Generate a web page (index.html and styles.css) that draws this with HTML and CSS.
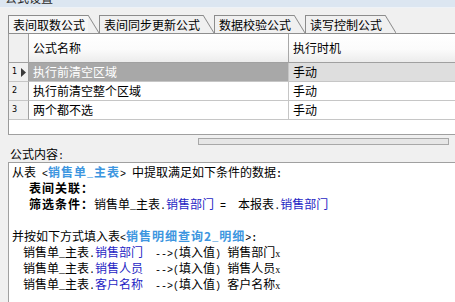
FILE: index.html
```html
<!DOCTYPE html>
<html lang="zh-CN">
<head>
<meta charset="utf-8">
<title>公式设置</title>
<link rel="stylesheet" href="styles.css">
</head>
<body>
<div class="titlebar"><span>公式设置</span></div>
<div class="main">
  <div class="tabs">
    <div class="tab active"><span class="lbl">表间取数公式</span><span class="slant"></span></div>
    <div class="tab"><span class="lbl">表间同步更新公式</span><span class="slant"></span></div>
    <div class="tab"><span class="lbl">数据校验公式</span><span class="slant"></span></div>
    <div class="tab"><span class="lbl">读写控制公式</span><span class="slant"></span></div>
  </div>
  <div class="grid">
    <div class="row head">
      <div class="rh"></div>
      <div class="c1">公式名称</div>
      <div class="c2">执行时机</div>
    </div>
    <div class="row sel">
      <div class="rh"><span class="num">1</span><svg class="arrow" width="5" height="9" viewBox="0 0 5 9"><polygon points="0,0 5,4.5 0,9" fill="#3a3a3a"/></svg></div>
      <div class="c1">执行前清空区域</div>
      <div class="c2">手动</div>
    </div>
    <div class="row">
      <div class="rh"><span class="num">2</span></div>
      <div class="c1">执行前清空整个区域</div>
      <div class="c2">手动</div>
    </div>
    <div class="row">
      <div class="rh"><span class="num">3</span></div>
      <div class="c1">两个都不选</div>
      <div class="c2">手动</div>
    </div>
    <div class="empty"></div>
  </div>
  <div class="hscroll"></div>
  <div class="label">公式内容<span class="h">:</span></div>
  <div class="content">
    <div class="line">从表<span class="h"> &lt;</span><b class="ref">销售单<span class="h">_</span>主表</b><span class="h">&gt; </span>中提取满足如下条件的数据<b class="h">:</b></div>
    <div class="line ind"><b>表间关联：</b></div>
    <div class="line ind"><b>筛选条件：</b>销售单<span class="h">_</span>主表<span class="h">.</span><span class="fld">销售部门</span><span class="h">&nbsp;=&nbsp;&nbsp;</span>本报表<span class="h">.</span><span class="fld">销售部门</span></div>
    <div class="line">&nbsp;</div>
    <div class="line">并按如下方式填入表<span class="h">&lt;</span><b class="ref">销售明细查询2<span class="h">_</span>明细</b><span class="h">&gt;</span><b class="h">:</b></div>
    <div class="line ind2">销售单<span class="h">_</span>主表<span class="h">.</span><span class="fld">销售部门</span><span class="h">&nbsp;&nbsp;--&gt;(</span>填入值<span class="h">)&nbsp;</span>销售部门<span class="x">x</span></div>
    <div class="line ind2">销售单<span class="h">_</span>主表<span class="h">.</span><span class="fld">销售人员</span><span class="h">&nbsp;&nbsp;--&gt;(</span>填入值<span class="h">)&nbsp;</span>销售人员<span class="x">x</span></div>
    <div class="line ind2">销售单<span class="h">_</span>主表<span class="h">.</span><span class="fld">客户名称</span><span class="h">&nbsp;&nbsp;--&gt;(</span>填入值<span class="h">)&nbsp;</span>客户名称<span class="x">x</span></div>
  </div>
</div>
</body>
</html>
```
FILE: styles.css
```css
html, body {
  margin: 0;
  padding: 0;
}
body {
  width: 455px;
  height: 302px;
  overflow: hidden;
  background: #f0f0f0;
  font-family: "Noto Sans CJK SC", "Noto Sans", sans-serif;
  font-size: 12px;
  color: #000;
}

.titlebar {
  height: 7px;
  border-bottom: 1px solid #eef2f7;
  background: #dce6f1;
  overflow: hidden;
}
.titlebar span {
  display: block;
  margin-top: -9px;
  padding-left: 5px;
  line-height: 14px;
  color: #2a2a2a;
}

.main {
  padding: 7px 0 0 8px;
}

/* tabs */
.tabs {
  display: flex;
  height: 18px;
}
.tab {
  display: flex;
}
.tab .lbl {
  border-top: 1px solid #8c8c8c;
  border-left: 1px solid #8c8c8c;
  padding: 0 3px 0 4px;
  line-height: 17px;
  background: #f0f0f0;
  white-space: nowrap;
}
.tab.active .lbl {
  background: #f6f6f6;
}
.tab .slant {
  width: 11px;
  background: linear-gradient(to top right, transparent calc(50% - 0.9px), #8c8c8c 50%, transparent calc(50% + 0.9px));
}

/* grid */
.grid {
  border-top: 1px solid #8e8e8e;
  border-left: 1px solid #9a9a9a;
  border-bottom: 1px solid #a0a0a0;
  background: #fff;
}
.row {
  display: grid;
  grid-template-columns: 20px 260px 1fr;
  height: 19px;
}
.row > div {
  border-bottom: 1px solid #c6c6c6;
  line-height: 18px;
  white-space: nowrap;
  overflow: hidden;
}
.row .rh {
  background: #f0f0f0;
  border-right: 1px solid #a0a0a0;
  display: flex;
  align-items: center;
  padding-left: 3px;
}
.row .c1 {
  border-right: 1px solid #c6c6c6;
  padding-left: 4px;
}
.row .c2 {
  padding-left: 4px;
}
.row.head {
  height: 29px;
}
.row.head > div {
  line-height: 28px;
  border-bottom-color: #a0a0a0;
  background: linear-gradient(#ffffff 0%, #fbfbfb 55%, #ececec 100%);
}
.row.head .rh {
  background: #f0f0f0;
}
.row.head .c1 {
  border-right-color: #a8a8a8;
}
.row.sel .c1 {
  background: #a8a8a8;
  color: #fff;
}
.row.sel .c2 {
  background: #dedede;
}
.num {
  font-family: "DejaVu Sans", sans-serif;
  font-size: 8px;
  line-height: 8px;
  width: 9px;
}
.arrow {
  display: block;
}
.empty {
  height: 14px;
}

/* horizontal scroll track */
.hscroll {
  margin: 3px 0 0 190px;
  width: 249px;
  height: 5px;
  border: 1px solid #a8a8a8;
  background: #e6e6e6;
}

.label {
  height: 17px;
  line-height: 17px;
  padding-left: 2px;
}

/* formula content */
.content {
  box-sizing: border-box;
  height: 140px;
  border-top: 1px solid #a0a0a0;
  border-left: 1px solid #a0a0a0;
  background: #fff;
  padding: 1px 0 0 3px;
  overflow: hidden;
}
.line {
  height: 16px;
  line-height: 16px;
  white-space: nowrap;
}
.line.ind {
  padding-left: 17px;
}
.line.ind2 {
  padding-left: 11px;
}
b {
  letter-spacing: 1px;
}
.h {
  font-family: "Liberation Mono", monospace;
  font-size: 10px;
  letter-spacing: 0;
  line-height: 10px;
}
b .h, b.h {
  letter-spacing: 1px;
}
.ref {
  color: #3d96e0;
}
.fld {
  color: #1f1fc4;
}
.x {
  font-family: "Liberation Serif", serif;
  font-size: 10px;
  line-height: 10px;
}
```
